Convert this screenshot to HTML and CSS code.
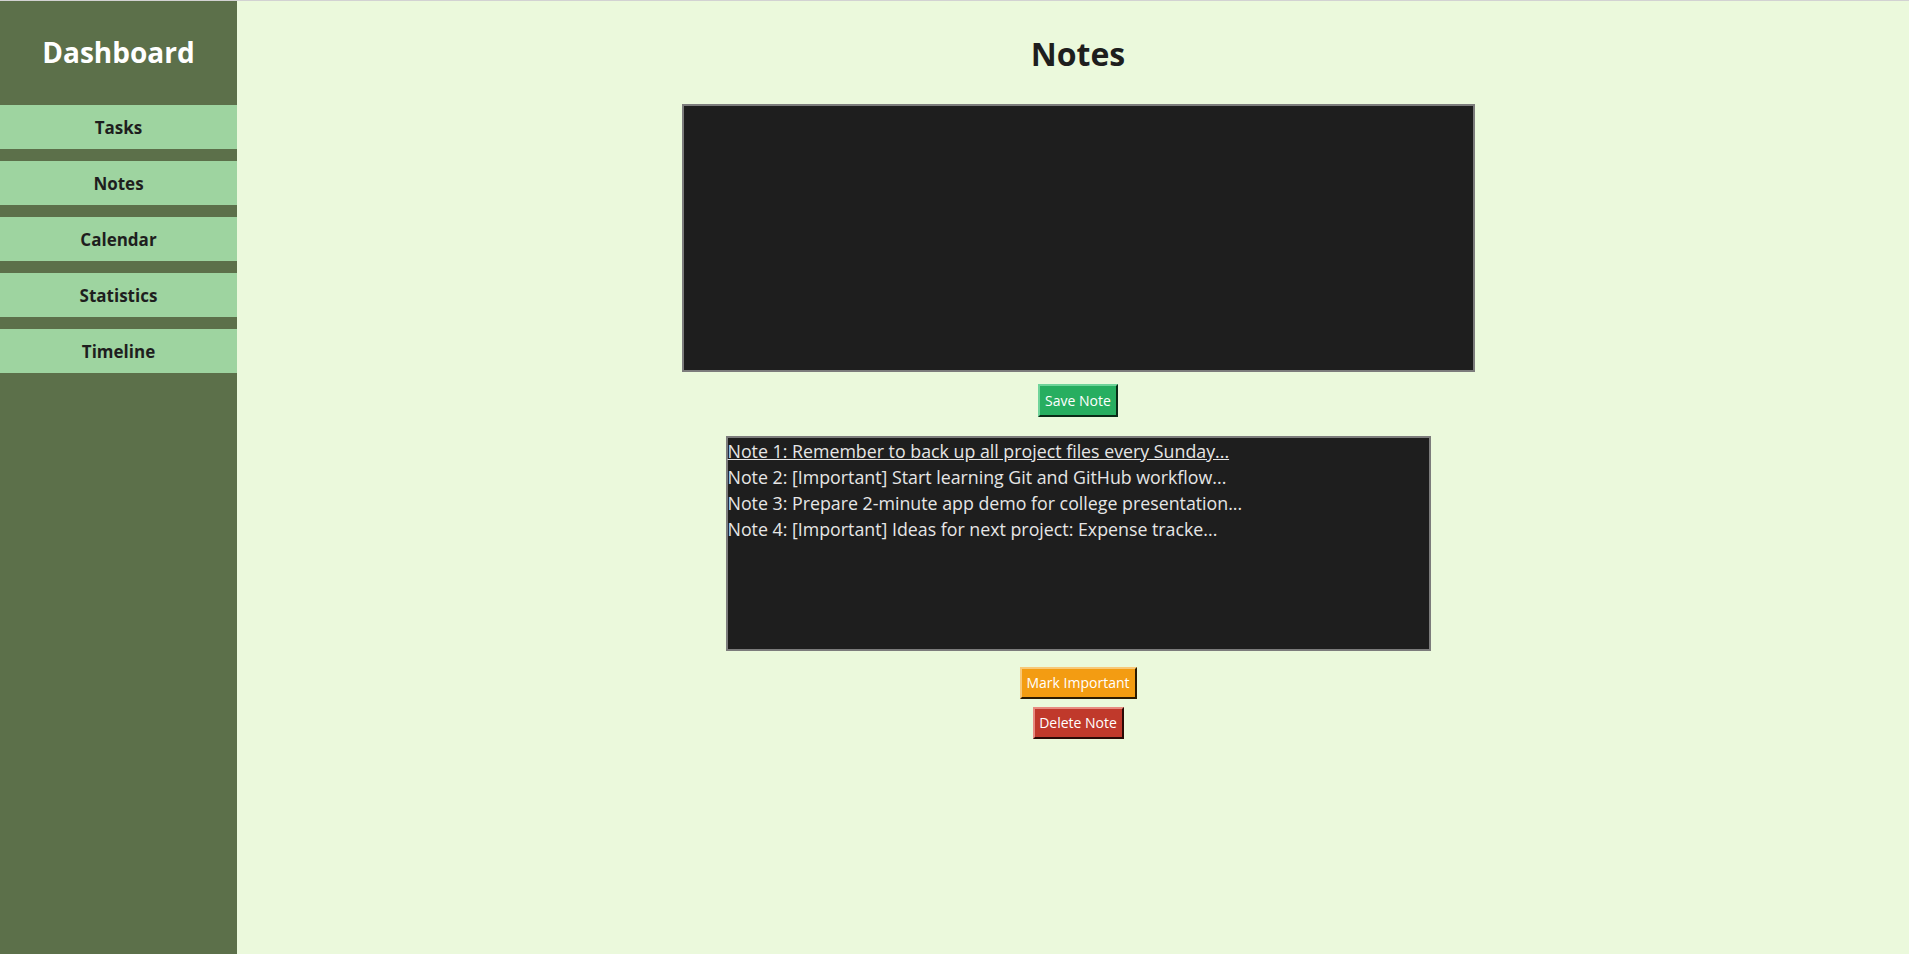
FILE: index.html
```html
<!DOCTYPE html>
<html lang="en">
<head>
<meta charset="utf-8">
<title>Dashboard - Notes</title>
<link rel="stylesheet" href="styles.css">
</head>
<body>
<div class="app">
  <aside class="sidebar">
    <h2 class="brand">Dashboard</h2>
    <nav class="nav">
      <button class="nav-btn">Tasks</button>
      <button class="nav-btn">Notes</button>
      <button class="nav-btn">Calendar</button>
      <button class="nav-btn">Statistics</button>
      <button class="nav-btn">Timeline</button>
    </nav>
  </aside>
  <main class="main">
    <h1 class="title">Notes</h1>
    <div class="editor"></div>
    <button class="btn btn-save">Save Note</button>
    <ul class="list">
      <li class="item active">Note 1: Remember to back up all project files every Sunday...</li>
      <li class="item">Note 2: [Important] Start learning Git and GitHub workflow...</li>
      <li class="item">Note 3: Prepare 2-minute app demo for college presentation...</li>
      <li class="item">Note 4: [Important] Ideas for next project: Expense tracke...</li>
    </ul>
    <button class="btn btn-mark">Mark Important</button>
    <button class="btn btn-delete">Delete Note</button>
  </main>
</div>
</body>
</html>
```
FILE: styles.css
```css
* { box-sizing: border-box; }
html, body { margin: 0; padding: 0; }
body {
  background: #ebf9dc;
  font-family: "Open Sans", "Noto Sans", sans-serif;
  border-top: 1px solid #d2d2d2;
}
.app {
  display: flex;
  height: 953px;
}
.sidebar {
  width: 237px;
  flex: none;
  background: #5c704a;
  padding-top: 33px;
  display: flex;
  flex-direction: column;
}
.brand {
  margin: 0 0 35px;
  color: #ffffff;
  font-size: 28px;
  font-weight: 700;
  line-height: 36px;
  text-align: center;
}
.nav {
  display: flex;
  flex-direction: column;
  gap: 12px;
}
.nav-btn {
  height: 44px;
  border: none;
  background: #9ed4a0;
  color: #1e1e1e;
  font-family: "Open Sans", "Noto Sans", sans-serif;
  font-size: 17px;
  font-weight: 700;
  padding: 0;
}
.main {
  flex: 1;
  display: flex;
  flex-direction: column;
  align-items: center;
  padding-top: 33px;
  padding-left: 10px;
}
.title {
  margin: 0 0 30px;
  font-size: 32px;
  font-weight: 700;
  line-height: 40px;
  color: #1e1e1e;
}
.editor {
  width: 793px;
  height: 268px;
  background: #1e1e1e;
  border: 2px solid #7c7c7c;
}
.btn {
  font-family: "Open Sans", "Noto Sans", sans-serif;
  font-size: 14px;
  color: #ffffff;
  height: 33px;
  padding: 0;
  border: 2px solid;
  line-height: 1;
  white-space: nowrap;
  text-align: center;
}
.btn-save {
  margin-top: 12px;
  width: 80px;
  background: #27ae60;
  border-color: #6fd49a #0a2b17 #0a2b17 #6fd49a;
}
.list {
  list-style: none;
  margin: 19px 0 0;
  padding: 0;
  width: 705px;
  height: 215px;
  background: #1e1e1e;
  border: 2px solid #7c7c7c;
}
.item {
  color: #e6e6e6;
  font-size: 17.8px;
  line-height: 26px;
  white-space: nowrap;
}
.item.active {
  text-decoration: underline;
}
.btn-mark {
  margin-top: 16px;
  width: 117px;
  height: 32px;
  background: #f39c12;
  border-color: #f8c878 #2a1a02 #2a1a02 #f8c878;
}
.btn-delete {
  margin-top: 8px;
  width: 91px;
  height: 32px;
  background: #c0392b;
  border-color: #e88a80 #2a0a06 #2a0a06 #e88a80;
}
```
